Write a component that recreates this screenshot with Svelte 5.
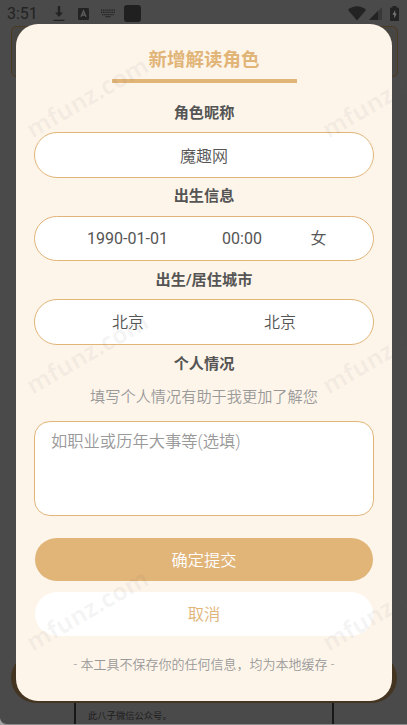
<script>
    const watermarks = [
        { x: 87, y: 97 },
        { x: 383, y: 97 },
        { x: 87, y: 353 },
        { x: 383, y: 353 },
        { x: 87, y: 610 },
        { x: 383, y: 610 },
    ];

    let nickname = "魔趣网";
    let remark = "";
</script>

<main>
    <header class="status-bar">
        <span class="clock">3:51</span>
        <svg class="download" width="12" height="16" viewBox="0 0 12 16">
            <path d="M4.8 0h2.4v6.5H10L6 11 2 6.5h2.8zM.5 13.8h11V15H.5z" />
        </svg>
        <svg class="letter" width="11" height="12" viewBox="0 0 11 12">
            <rect width="11" height="12" rx="1.2" />
            <path class="cut" d="M3 8.8 5.5 3 8 8.8M3.9 7h3.2" />
        </svg>
        <svg class="keyboard" width="14" height="9" viewBox="0 0 14 9">
            <path class="keys" d="M0 1.2h14M0 3.4h14M1 5.6h12" />
            <path d="M4 7.2h6L9 8.2H5z" />
        </svg>
        <span class="square"></span>
        <svg class="wifi" width="18" height="15" viewBox="0 0 18 15">
            <path d="M0 4C5-1 13-1 18 4L9 14.5z" />
        </svg>
        <svg class="signal" width="13" height="13" viewBox="0 0 13 13">
            <path d="M0 13 13 0v13z" opacity=".45" />
            <path d="M0 13 9 4v9z" />
        </svg>
        <svg class="battery" width="9" height="15" viewBox="0 0 9 15">
            <path d="M2.5 1.5V0h4v1.5H8a1 1 0 0 1 1 1V14a1 1 0 0 1-1 1H1a1 1 0 0 1-1-1V2.5a1 1 0 0 1 1-1z" />
            <path class="bolt" d="M5.2 4 2.5 8.8h1.7v3.7l2.5-5H5.2z" />
        </svg>
    </header>

    <!-- page behind the dialog -->
    <div class="back-card"></div>
    <div class="back-note">此八子微信公众号。</div>
    <div class="back-button"></div>

    <section class="dialog">
        <h1>新增解读角色</h1>
        <h2 class="first">角色昵称</h2>
        <input class="field" bind:value={nickname} />
        <h2 class="birth-title">出生信息</h2>
        <div class="field birth">
            <span class="date">1990-01-01</span>
            <span class="time">00:00</span>
            <span class="sex">女</span>
        </div>
        <h2>出生/居住城市</h2>
        <div class="field city">
            <span>北京</span>
            <span>北京</span>
        </div>
        <h2 class="about">个人情况</h2>
        <p class="hint">填写个人情况有助于我更加了解您</p>
        <textarea placeholder="如职业或历年大事等(选填)" bind:value={remark}></textarea>
        <button class="submit">确定提交</button>
        <button class="cancel">取消</button>
        <p class="footnote">- 本工具不保存你的任何信息，均为本地缓存 -</p>
    </section>

    {#each watermarks as mark}
        <div class="watermark" style="left: {mark.x}px; top: {mark.y}px">mfunz.com</div>
    {/each}
</main>

<style>
    :global(body) {
        margin: 0;
        background: #a5a5a5;
    }
    main {
        position: relative;
        box-sizing: border-box;
        width: 407px;
        height: 725px;
        overflow: hidden;
        background: #4a4a4a;
        border-bottom: 1px solid #8b8b8b;
        border-bottom-left-radius: 7px;
        font-family: Roboto, "Noto Sans CJK SC", sans-serif;
        font-weight: 350;
        color: #555;
    }
    .status-bar {
        display: flex;
        align-items: center;
        height: 24px;
        padding: 3px 8px 0 7px;
        box-sizing: border-box;
        fill: #232323;
    }
    .clock {
        width: 46px;
        padding-top: 1px;
        font-size: 16px;
        font-weight: 400;
        line-height: 22px;
        color: #232323;
    }
    .letter {
        margin-left: 13px;
    }
    .keyboard {
        margin-left: 12px;
    }
    .cut {
        fill: none;
        stroke: #5c5c5c;
        stroke-width: 1.4;
    }
    .keys {
        stroke: #232323;
        stroke-width: 1.3;
        stroke-dasharray: 1.3 0.8;
    }
    .square {
        width: 17px;
        height: 17px;
        margin-left: 9px;
        border-radius: 3px;
        background: #202020;
    }
    .wifi {
        margin-left: auto;
    }
    .signal {
        margin-left: 3px;
    }
    .battery {
        margin-left: 8px;
    }
    .bolt {
        fill: #777;
    }
    .back-card {
        position: absolute;
        left: 11px;
        top: 26px;
        width: 385px;
        height: 49px;
        border: 1px solid #4b3a22;
        border-radius: 5px;
        background: #484642;
    }
    .back-note {
        position: absolute;
        left: 74px;
        top: 690px;
        width: 244px;
        height: 34px;
        padding-left: 12px;
        border: solid #181818;
        border-width: 0 2px;
        font-size: 9.3px;
        font-weight: 400;
        line-height: 51px;
        color: #1d1d1d;
    }
    .back-button {
        position: absolute;
        left: 11px;
        top: 653px;
        width: 386px;
        height: 50px;
        border-radius: 25px;
        background: #433521;
    }
    .dialog {
        position: absolute;
        left: 16px;
        top: 24px;
        width: 376px;
        height: 677px;
        box-sizing: border-box;
        padding: 20px 18px 0;
        display: flex;
        flex-direction: column;
        border-radius: 22px;
        background: #fef5ea;
        text-align: center;
    }
    h1 {
        align-self: center;
        width: 185px;
        margin: 0;
        padding: 1px 0 4px;
        border-bottom: 4px solid #e1b478;
        font-size: 18.5px;
        font-weight: 700;
        line-height: 30px;
        color: #e1b478;
    }
    h2 {
        margin: 0;
        font-size: 15.2px;
        font-weight: 700;
        line-height: 38px;
        height: 38px;
    }
    .first {
        height: 38px;
        padding-top: 11px;
    }
    .birth-title {
        line-height: 36px;
    }
    .about {
        height: 37px;
    }
    .field {
        box-sizing: border-box;
        width: 340px;
        height: 46px;
        flex: none;
        border: 1px solid #e1b478;
        border-radius: 23px;
        background: #fff;
        font: inherit;
        font-size: 16px;
        line-height: 44px;
        color: #555;
        text-align: center;
        outline: none;
    }
    .birth,
    .city {
        display: flex;
    }
    .birth {
        height: 45px;
    }
    .date {
        width: 185px;
        font-weight: 400;
    }
    .time {
        width: 44px;
        font-weight: 400;
    }
    .sex {
        width: 109px;
    }
    .city {
        padding: 1px 17px 0;
    }
    .city span {
        flex: 1;
    }
    .hint {
        margin: 0;
        font-size: 15.2px;
        line-height: 30px;
        color: #999;
    }
    textarea {
        box-sizing: border-box;
        width: 340px;
        height: 95px;
        margin: 9px 0 22px;
        padding: 8px 16px;
        border: 1px solid #e1b478;
        border-radius: 16px;
        background: #fff;
        font: inherit;
        font-size: 16.3px;
        line-height: 24px;
        resize: none;
        outline: none;
    }
    textarea::placeholder {
        color: #999;
    }
    button {
        width: 338px;
        height: 43px;
        margin-left: 1px;
        padding: 0;
        border: 0;
        border-radius: 22px;
        font: inherit;
        font-size: 16.3px;
    }
    .submit {
        padding-bottom: 2px;
        background: #e1b478;
        color: #fff;
    }
    .cancel {
        height: 44px;
        margin-top: 11px;
        padding-bottom: 2px;
        background: #fff;
        color: #e1b478;
    }
    .footnote {
        margin: 19px 0 0;
        font-size: 13px;
        line-height: 20px;
        color: #999;
        white-space: nowrap;
    }
    .watermark {
        position: absolute;
        font-family: "Open Sans", "Noto Sans", sans-serif;
        font-size: 24.5px;
        font-weight: 700;
        line-height: 30px;
        color: rgba(90, 90, 90, 0.06);
        transform: translate(-50%, -50%) rotate(-30deg);
        pointer-events: none;
    }
</style>
